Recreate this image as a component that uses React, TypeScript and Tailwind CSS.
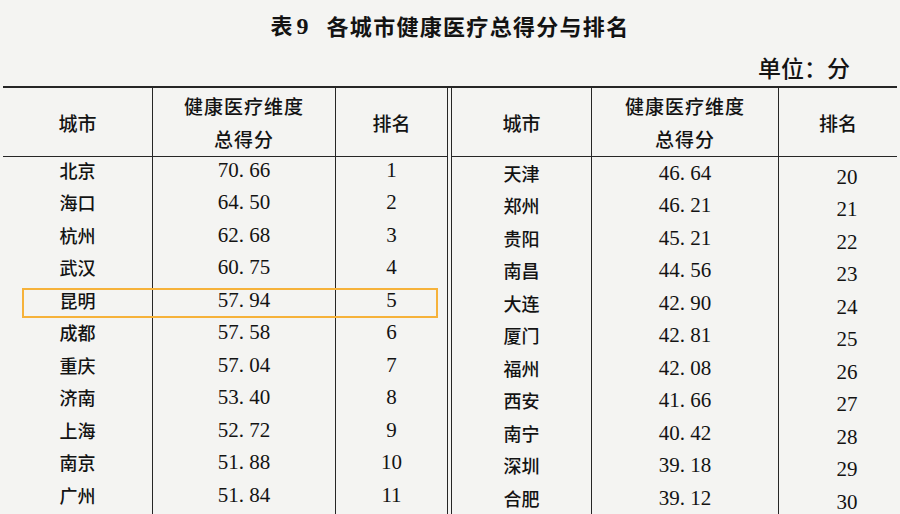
const leftRows = [
  ["北京", "70. 66", "1"],
  ["海口", "64. 50", "2"],
  ["杭州", "62. 68", "3"],
  ["武汉", "60. 75", "4"],
  ["昆明", "57. 94", "5"],
  ["成都", "57. 58", "6"],
  ["重庆", "57. 04", "7"],
  ["济南", "53. 40", "8"],
  ["上海", "52. 72", "9"],
  ["南京", "51. 88", "10"],
  ["广州", "51. 84", "11"],
];

const rightRows = [
  ["天津", "46. 64", "20"],
  ["郑州", "46. 21", "21"],
  ["贵阳", "45. 21", "22"],
  ["南昌", "44. 56", "23"],
  ["大连", "42. 90", "24"],
  ["厦门", "42. 81", "25"],
  ["福州", "42. 08", "26"],
  ["西安", "41. 66", "27"],
  ["南宁", "40. 42", "28"],
  ["深圳", "39. 18", "29"],
  ["合肥", "39. 12", "30"],
];

const cjk = "font-['Noto_Sans_CJK_SC',sans-serif]";
const serif = "font-['Liberation_Serif','Noto_Sans_CJK_SC',serif]";

type ColProps = {
  width: string;
  head: React.ReactNode;
  items: string[];
  textClass: string;
  bodyPad?: string;
  last?: boolean;
};

// one column of the table, vertical rule drawn by its right border
function Column({ width, head, items, textClass, bodyPad = "", last = false }: ColProps) {
  return (
    <div className={`${width} flex flex-col ${last ? "" : "border-r-[1.5px] border-[#262626]"}`}>
      <div className={`h-[69px] shrink-0 border-b-[1.5px] border-[#262626] flex flex-col items-center justify-center ${cjk} text-[19px] leading-[33px] font-medium`}>
        {head}
      </div>
      <div className={`flex flex-col ${bodyPad}`}>
        {items.map((t, i) => (
          <div key={i} className={`h-[32.5px] shrink-0 flex items-center justify-center ${textClass}`}>
            {t}
          </div>
        ))}
      </div>
    </div>
  );
}

const scoreHead = (
  <>
    <span className="tracking-[1px]">健康医疗维度</span>
    <span className="tracking-[1px]">总得分</span>
  </>
);

export default function App() {
  return (
    <div className="relative w-[900px] h-[514px] overflow-hidden bg-[#f4f4f2] text-[#131313]">
      {/* 标题 */}
      <div className={`pt-[10px] h-[40px] flex justify-center items-center gap-[18px] text-[22px] leading-[30px] font-bold ${cjk}`}>
        <span>
          表<span className={`${serif} font-bold text-[24px] ml-[4px]`}>9</span>
        </span>
        <span className="tracking-[1.3px]">各城市健康医疗总得分与排名</span>
      </div>

      <div className={`mt-[12px] h-[30px] flex justify-end pr-[50px] text-[23px] leading-[30px] font-medium ${cjk}`}>
        单位：分
      </div>

      <div className="mt-[4px] ml-[3px] w-[894px] h-[440px] flex border-t-2 border-[#262626]">
        {/* 左表 */}
        <div className="w-[445px] flex border-r-[1.5px] border-[#262626]">
          <Column width="w-[150px]" head="城市" items={leftRows.map((r) => r[0])} textClass={`${cjk} text-[18px] font-medium`} bodyPad="-mt-[3px]" />
          <Column width="w-[183px]" head={scoreHead} items={leftRows.map((r) => r[1])} textClass={`${serif} text-[21px]`} bodyPad="-mt-[3px]" />
          <Column width="flex-1" head="排名" items={leftRows.map((r) => r[2])} textClass={`${serif} text-[21px]`} bodyPad="-mt-[3px]" last />
        </div>
        <div className="w-[3px]" />
        {/* 右表 */}
        <div className="flex-1 flex border-l-[1.5px] border-[#262626]">
          <Column width="w-[140px]" head="城市" items={rightRows.map((r) => r[0])} textClass={`${cjk} text-[18px] font-medium`} />
          <Column width="w-[187px]" head={scoreHead} items={rightRows.map((r) => r[1])} textClass={`${serif} text-[21px]`} />
          <Column width="flex-1" head="排名" items={rightRows.map((r) => r[2])} textClass={`${serif} text-[21px]`} bodyPad="pt-[4px] pl-[18px]" last />
        </div>
      </div>

      {/* 高亮框 */}
      <div className="absolute left-[22px] top-[288px] w-[416px] h-[30px] border-2 border-[#f6b23a]" />
    </div>
  );
}
